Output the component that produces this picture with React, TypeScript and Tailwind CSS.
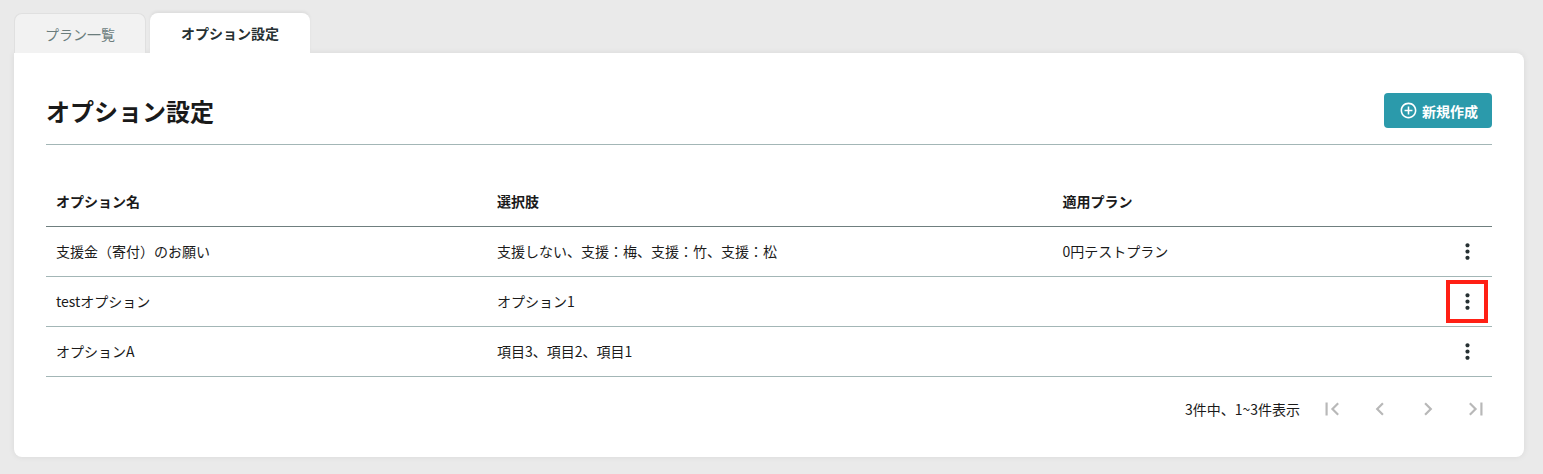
import {
  MdAddCircleOutline,
  MdChevronLeft,
  MdChevronRight,
  MdFirstPage,
  MdLastPage,
  MdMoreVert,
} from "react-icons/md";

const options = [
  {
    name: "支援金（寄付）のお願い",
    choices: "支援しない、支援：梅、支援：竹、支援：松",
    plan: "0円テストプラン",
    highlighted: false,
  },
  {
    name: "testオプション",
    choices: "オプション1",
    plan: "",
    highlighted: true,
  },
  {
    name: "オプションA",
    choices: "項目3、項目2、項目1",
    plan: "",
    highlighted: false,
  },
];

const pagerButtons = [
  { label: "最初のページ", icon: MdFirstPage },
  { label: "前のページ", icon: MdChevronLeft },
  { label: "次のページ", icon: MdChevronRight },
  { label: "最後のページ", icon: MdLastPage },
];

function Tabs() {
  return (
    <div role="tablist" className="flex items-end gap-1">
      <button
        type="button"
        role="tab"
        aria-selected="false"
        className="h-10 rounded-t-lg border border-b-0 border-[#e0e0e0] bg-[#f2f2f2] px-[30px] text-[#6b7d7d]"
      >
        プラン一覧
      </button>
      <button
        type="button"
        role="tab"
        aria-selected="true"
        className="relative h-10 rounded-t-lg bg-white px-[31px] font-bold text-[#263032] shadow-[0_-2px_3px_rgba(0,0,0,0.05)]"
      >
        オプション設定
      </button>
    </div>
  );
}

function OptionTable() {
  return (
    <table className="mt-[31px] w-full table-fixed border-collapse text-left">
      <colgroup>
        <col className="w-[30.5%]" />
        <col className="w-[39.1%]" />
        <col />
        <col className="w-14" />
      </colgroup>
      <thead>
        <tr className="h-[50px] border-b border-[#6f7f7f]">
          <th className="px-2.5 font-bold">オプション名</th>
          <th className="px-2.5 font-bold">選択肢</th>
          <th className="px-2.5 font-bold">適用プラン</th>
          <td />
        </tr>
      </thead>
      <tbody>
        {options.map((option) => (
          <tr key={option.name} className="h-[50px] border-b border-[#a3b6b6]">
            <td className="px-2.5">{option.name}</td>
            <td className="px-2.5">{option.choices}</td>
            <td className="px-2.5">{option.plan}</td>
            <td className="pr-1">
              <button
                type="button"
                aria-label={`${option.name}のメニュー`}
                className={`ml-auto flex h-[43px] w-[42px] items-center justify-center border-4 text-[#263032] ${
                  option.highlighted ? "border-[#ff2015]" : "border-transparent"
                }`}
              >
                <MdMoreVert size={25} className="shrink-0" />
              </button>
            </td>
          </tr>
        ))}
      </tbody>
    </table>
  );
}

function Pager() {
  return (
    <nav aria-label="ページ切り替え" className="mt-2 -mr-2 flex items-center justify-end">
      <p className="mr-2">3件中、1~3件表示</p>
      {pagerButtons.map((button) => (
        <button
          key={button.label}
          type="button"
          aria-label={button.label}
          disabled
          className="flex size-12 items-center justify-center text-[#b8b8b8]"
        >
          <button.icon size={26} />
        </button>
      ))}
    </nav>
  );
}

export default function App() {
  return (
    <div className="min-h-screen bg-[#eaeaea] pt-[13px] pr-[19px] pb-4 pl-3.5 font-['Noto_Sans_CJK_JP',sans-serif] text-sm text-[#1a1a1a]">
      <Tabs />
      <main className="rounded-lg rounded-tl-none bg-white px-8 pt-10 pb-6 shadow-[0_0_6px_rgba(0,0,0,0.08)]">
        <div className="flex items-start justify-between border-b border-[#a3b6b6] pb-[15px]">
          <h1 className="text-2xl leading-9 font-bold">オプション設定</h1>
          <button
            type="button"
            className="flex h-[35px] items-center gap-1 rounded bg-[#2b9aab] pr-3.5 pl-[15px] font-bold text-white"
          >
            <MdAddCircleOutline size={19} />
            新規作成
          </button>
        </div>
        <OptionTable />
        <Pager />
      </main>
    </div>
  );
}
